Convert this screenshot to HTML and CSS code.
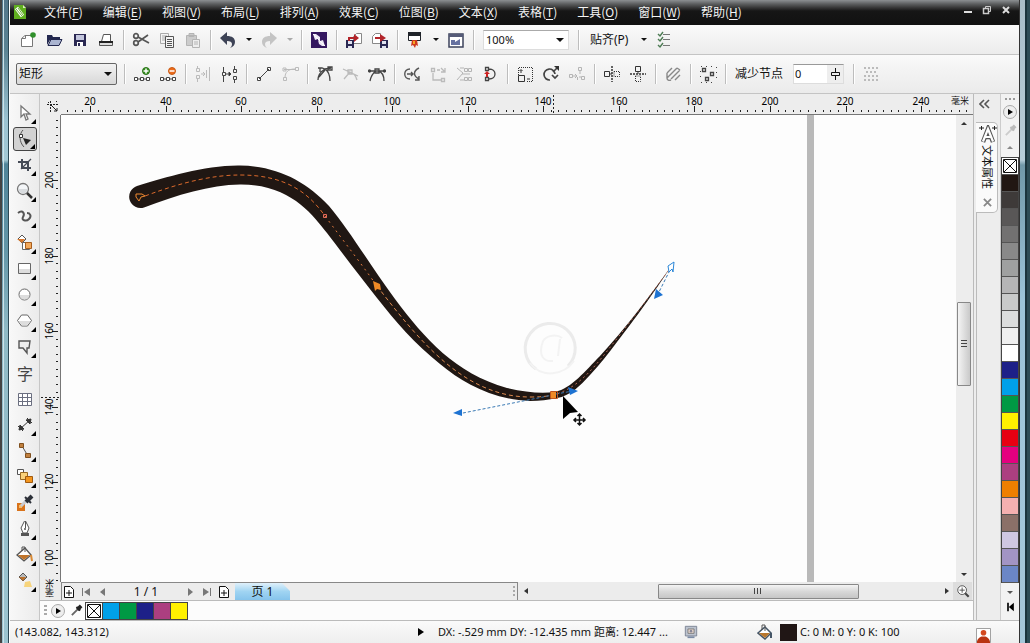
FILE: index.html
```html
<!DOCTYPE html>
<html lang="zh-CN">
<head>
<meta charset="utf-8">
<title>CorelDRAW</title>
<link rel="stylesheet" href="styles.css">
</head>
<body>
<div class="frame frame-left"></div>
<div class="app">
  <header class="menubar">
    <svg class="logo" viewBox="0 0 12 16"><path fill="#5fae1f" d="M0 1h9l3 3v11H0z"/><path fill="#d9f0b8" d="M9 1v3h3z"/><path stroke="#fff" stroke-width="4" d="M2.500 4l6 8"/><path stroke="#6fae3a" d="M2 5l6 7M4 4l5 7"/></svg>
    <nav class="menus">
      <button>文件(<u>F</u>)</button><button>编辑(<u>E</u>)</button><button>视图(<u>V</u>)</button><button>布局(<u>L</u>)</button><button>排列(<u>A</u>)</button><button>效果(<u>C</u>)</button><button>位图(<u>B</u>)</button><button>文本(<u>X</u>)</button><button>表格(<u>T</u>)</button><button>工具(<u>O</u>)</button><button>窗口(<u>W</u>)</button><button>帮助(<u>H</u>)</button>
    </nav>
    <div class="winbtns">
      <button aria-label="最小化"><svg viewBox="0 0 10 10"><path stroke="#ddd" stroke-width="2" d="M1 7h8"/></svg></button>
      <button aria-label="还原"><svg viewBox="0 0 10 10" fill="none" stroke="#ccc"><path d="M3.500 3V1.500h5v5H7"/><path stroke-width="1.500" d="M1.500 3.500h5v5h-5z"/></svg></button>
      <button aria-label="关闭"><svg viewBox="0 0 10 10"><path stroke="#ddd" stroke-width="2" d="M2 2l6 6M8 2l-6 6"/></svg></button>
    </div>
  </header>

  <div class="toolbar standard">
    <button class="ib" aria-label="新建"><svg viewBox="0 0 18 18"><path fill="#fff" stroke="#777" d="M2.500 7.500L6 4.500h7.500v11h-11z"/><path fill="none" stroke="#777" d="M3 7.500h3.500V5"/><circle cx="14" cy="4" r="2.800" fill="#2f8f2a"/></svg></button>
    <button class="ib" aria-label="打开"><svg viewBox="0 0 18 18"><path fill="#23284f" d="M2 14V4h5l1 2h7v3H5z"/><path fill="#aab4d0" stroke="#23284f" d="M3 14.500l3-6h11l-3 6z"/></svg></button>
    <button class="ib" aria-label="保存"><svg viewBox="0 0 18 18"><path fill="#2a2852" d="M3 3h12v12H3z"/><path fill="#c3c6dd" d="M5 4h8v5H5z"/><path fill="#fff" d="M6 11h6v4H6z"/><path fill="#2a2852" d="M7 12h2v3H7z"/></svg></button>
    <button class="ib" aria-label="打印"><svg viewBox="0 0 18 18"><path fill="#fff" stroke="#555" d="M6.500 3.500h7v7h-9z"/><path fill="#ddd" stroke="#555" d="M2.500 10.500h13v4h-13z"/><path stroke="#222" stroke-width="2" d="M2 11h14"/></svg></button>
    <i class="sep"></i>
    <button class="ib" aria-label="剪切"><svg viewBox="0 0 18 18" fill="none" stroke="#555" stroke-width="1.700"><circle cx="4" cy="5" r="2.300"/><circle cx="4" cy="12" r="2.300"/><path d="M6 6l11 6M6 11l10-7"/></svg></button>
    <button class="ib" aria-label="复制"><svg viewBox="0 0 18 18" fill="#f4f4f4"><path stroke="#aaa" d="M2.500 2.500h8v10h-8zM4 5h5M4 7h5M4 9h5"/><path stroke="#555" d="M7.500 5.500h8v11h-8zM9 8.500h5M9 10.500h5M9 12.500h5M9 14.500h5"/></svg></button>
    <button class="ib" aria-label="粘贴" disabled><svg viewBox="0 0 18 18" fill="#ccc" stroke="#b4b4b4"><path d="M2.500 4.500h10v10h-10zM5 2.500h5v3H5z"/><path fill="#eee" d="M8.500 8.500h7v8h-7zM10 11h4M10 13h4"/></svg></button>
    <i class="sep"></i>
    <button class="ib" aria-label="撤销"><svg viewBox="0 0 18 18"><path fill="#3d4356" d="M1 7l7-6v4c5 0 8 2 8 6 0 3-2 5-5 6 1-1 2-2 2-4s-2-3-5-3v4z"/></svg></button>
    <button class="drop" aria-label="撤销列表"></button>
    <button class="ib" aria-label="重做" disabled><svg viewBox="0 0 18 18"><path fill="#c4c4c4" d="M17 7l-7-6v4c-5 0-8 2-8 6 0 3 2 5 5 6-1-1-2-2-2-4s2-3 5-3v4z"/></svg></button>
    <button class="drop faint" aria-label="重做列表" disabled></button>
    <i class="sep"></i>
    <button class="ib" aria-label="搜索内容"><svg viewBox="0 0 18 18"><path fill="#34175f" d="M1 1h16v16H1z"/><path fill="#eee9f6" d="M3 3h3l4 3v4L8 8 5 9zM15 15h-3l-3-2-1-4 2 1 3-1z"/><path stroke="#fff" d="M3 3l12 12"/></svg></button>
    <i class="sep"></i>
    <button class="ib" aria-label="导入"><svg viewBox="0 0 18 18"><path fill="#fff" stroke="#888" d="M8.500 5.500l3-3h5v10h-8z"/><path fill="#2a2852" d="M1 9h8v8H1z"/><path fill="#dfe2ef" d="M3 10h4v3H3zM3 15h4v2H3z"/><path fill="#b3242a" d="M3 6h6V3l5 4-5 4V8H5v2H3z"/></svg></button>
    <button class="ib" aria-label="导出"><svg viewBox="0 0 18 18"><path fill="#fff" stroke="#888" d="M1.500 5.500l3-3h5v10h-8z"/><path fill="#2a2852" d="M9 9h8v8H9z"/><path fill="#dfe2ef" d="M11 10h4v3h-4zM11 15h4v2h-4z"/><path fill="#b3242a" d="M4 6h5V3l6 4-6 4V8H4z"/></svg></button>
    <i class="sep"></i>
    <button class="ib" aria-label="应用程序启动器"><svg viewBox="0 0 18 18"><path fill="#fff" stroke="#20242a" d="M2.500 1.500h12v8h-12z"/><path fill="#20242a" d="M2 1h13v4H2z"/><path fill="#cf3a1e" d="M6 9h5l1 6-2-1-1 3-2-3-2 1z"/><path fill="#f5a623" d="M7 10h2v3H7z"/></svg></button>
    <button class="drop" aria-label="启动器列表"></button>
    <button class="ib" aria-label="欢迎屏幕"><svg viewBox="0 0 18 18"><path fill="#fff" stroke="#3d435c" stroke-width="1.500" d="M2 3h14v13H2z"/><path fill="#555b78" d="M2 3h14v3H2z"/><path fill="#6671a0" d="M4 9h4v2l5-3v6H4z"/></svg></button>
    <i class="sep"></i>
    <label class="combo zoom"><select aria-label="缩放级别"><option>100%</option></select></label>
    <i class="sep"></i>
    <button class="snap">贴齐(P)</button><button class="drop" aria-label="贴齐选项"></button>
    <button class="ib" aria-label="选项"><svg viewBox="0 0 18 18" fill="none"><path stroke="#777" d="M8 3.500h7M8 8.500h7M8 14.500h7"/><path stroke="#4c7b53" stroke-width="1.400" d="M3 3l2 2 3-4M3 8l2 2 3-4M3 14l2 2 3-4"/></svg></button>
  </div>

  <div class="toolbar property">
    <label class="combo shape"><select aria-label="选取模式"><option>矩形</option></select></label>
    <i class="sep"></i>
    <button class="ib" aria-label="添加节点"><svg viewBox="0 0 18 18" fill="#fff" stroke="#444"><path d="M1.500 12.500h3v3h-3zM7.500 12.500h3v3h-3zM13.500 12.500h3v3h-3zM5 14h2M11 14h2"/><circle cx="13" cy="6" r="3.500" fill="#388e22" stroke="#2c761a"/><path stroke="#fff" stroke-width="1.500" d="M10.500 6h5M13 3.500v5"/></svg></button>
    <button class="ib" aria-label="删除节点"><svg viewBox="0 0 18 18" fill="#fff" stroke="#444"><path d="M1.500 12.500h3v3h-3zM7.500 12.500h3v3h-3zM13.500 12.500h3v3h-3zM5 14h2M11 14h2"/><circle cx="13" cy="6" r="3.500" fill="#ed6c1c" stroke="#c85a14"/><path stroke="#fff" stroke-width="1.500" d="M10.500 6h5"/></svg></button>
    <i class="sep"></i>
    <button class="ib" aria-label="连接两个节点" disabled><svg viewBox="0 0 18 18" fill="none" stroke="#bbb"><path d="M3.500 1v2M2.500 3.500h3v3h-3zM2.500 10.500h3v3h-3zM3.500 14v3M15.500 2v14M12.500 5v8M7 9h4M9 7l2 2-2 2"/></svg></button>
    <button class="ib" aria-label="断开曲线"><svg viewBox="0 0 18 18" fill="none" stroke="#444"><path d="M3.500 2v5M2.500 7.500h3v3h-3zM3.500 11v6M14.500 1v3M13.500 4.500h3v3h-3zM13.500 11.500h3v3h-3zM14.500 15v3M6 9h5"/><path fill="#222" d="M9 7l2 2-2 2z"/></svg></button>
    <i class="sep"></i>
    <button class="ib" aria-label="转换为线条"><svg viewBox="0 0 18 18" fill="#fff" stroke="#444"><path d="M4 14L14 4M2.500 12.500h3v3h-3zM12.500 2.500h3v3h-3z"/></svg></button>
    <button class="ib" aria-label="转换为曲线" disabled><svg viewBox="0 0 18 18" fill="none" stroke="#bbb"><path d="M4 13c0-6 3-9 10-9M2.500 12.500h3v3h-3zM14.500 2.500h3v3h-3zM3 4.500h12M2 3h3v3H2z"/></svg></button>
    <i class="sep"></i>
    <button class="ib" aria-label="尖突节点"><svg viewBox="0 0 18 18" fill="none" stroke="#444" stroke-width="1.300"><path d="M2 15c0-5 2-8 7-11M9 4c3 2 5 6 5 12M2 3h4l3 1 6-1M9 5l-6 7M12 2h4v3h-4zM4 3v4"/></svg></button>
    <button class="ib" aria-label="平滑节点" disabled><svg viewBox="0 0 18 18" fill="none" stroke="#bbb" stroke-width="1.300"><path d="M1 4l15 7M2 14l6-7c3 1 6 4 7 8M6 5h4v4H6z"/></svg></button>
    <button class="ib" aria-label="对称节点"><svg viewBox="0 0 18 18" fill="none" stroke="#444" stroke-width="1.300"><path d="M1 6h16M2 16c1-5 3-8 6-10M10 6c4 1 6 5 6 10M7 4h4v4H7z"/><circle cx="1.500" cy="6" r="1" fill="#222"/><circle cx="16.500" cy="6" r="1" fill="#222"/></svg></button>
    <i class="sep"></i>
    <button class="ib" aria-label="反转方向"><svg viewBox="0 0 18 18" fill="none" stroke="#555" stroke-width="1.400"><path d="M7 4C0 4 0 14 7 14M4 9h6M8 7l2 2-2 2M16 3c-6 3-6 8 0 11M16 11v4h-4"/></svg></button>
    <button class="ib" aria-label="延长曲线" disabled><svg viewBox="0 0 18 18" fill="none" stroke="#bbb" stroke-width="1.300"><path d="M2.500 3.500h3v3h-3zM4 8v7h8M12.500 13.500h3v3h-3zM8 5h3M12 3l4 4M16 3v4h-4"/></svg></button>
    <button class="ib" aria-label="提取子路径" disabled><svg viewBox="0 0 18 18" fill="none" stroke="#b5b5b5"><path d="M2 3l6 5-6 7M5 3h4M5 15h4M9.500 3.500h3v3h-3zM13.500 3.500h3v3h-3zM9.500 12.500h3v3h-3zM13.500 12.500h3v3h-3zM7 9h8"/></svg></button>
    <button class="ib" aria-label="闭合曲线"><svg viewBox="0 0 18 18" fill="none" stroke="#444" stroke-width="1.300"><path d="M8 4c8 0 8 10 0 10M4.500 2.500h3v3h-3zM4.500 12.500h3v3h-3z"/><path fill="#cc2222" stroke="none" d="M6 6l3 3H7v3H5V9H3z"/></svg></button>
    <i class="sep"></i>
    <button class="ib" aria-label="延展与缩放"><svg viewBox="0 0 18 18" fill="none" stroke="#333"><path stroke-dasharray="1 1" d="M2.500 10V2.500h14v14H10"/><path d="M2.500 10.500h6v6h-6zM5 5v3M3.500 6L5 4.500 6.500 6M11 14h3"/></svg></button>
    <button class="ib" aria-label="旋转与倾斜"><svg viewBox="0 0 18 18" fill="none" stroke="#444" stroke-width="1.700"><path d="M13 9a5.500 5.500 0 1 0-5 6M10 10l3 3 3-3M11 7l5-5"/><path fill="#333" stroke="none" d="M12 1h5v5z"/></svg></button>
    <button class="ib" aria-label="对齐节点" disabled><svg viewBox="0 0 18 18" fill="none" stroke="#b5b5b5"><path d="M1.500 9.500h3v3h-3zM10.500 2.500h3v3h-3zM13.500 11.500h3v3h-3zM5 11h4M7 9l2 2-2 2M12 6v3M11 12h2M9.500 12v3"/></svg></button>
    <i class="sep"></i>
    <button class="ib" aria-label="水平反射"><svg viewBox="0 0 18 18" fill="none" stroke="#333"><path d="M1.500 6.500h5v5h-5zM7 9h2"/><path stroke-width="1.500" stroke-dasharray="2 1" d="M9 1v16"/><path stroke-dasharray="1 1" d="M11 6.500h5.500v5H11z"/></svg></button>
    <button class="ib" aria-label="垂直反射"><svg viewBox="0 0 18 18" fill="none" stroke="#333"><path d="M6.500 1.500h5v5h-5zM9 7v2"/><path stroke-width="1.500" stroke-dasharray="2 1" d="M1 9h16"/><path stroke-dasharray="1 1" d="M6.500 11v5.500h5V11z"/></svg></button>
    <i class="sep"></i>
    <button class="ib" aria-label="弹性模式"><svg viewBox="0 0 18 18" fill="none" stroke="#888" stroke-width="1.400"><path d="M3 8l5-5M3 13L13 3M7 14l9-9M11 15l5-5M3 8v5M13 3l3 2M7 15c-2 1-4 0-4-2"/></svg></button>
    <i class="sep"></i>
    <button class="ib" aria-label="选择所有节点"><svg viewBox="0 0 18 18" fill="none" stroke="#444"><path stroke-width="1.300" d="M3.500 3.500h3v3h-3zM11.500 7.500h3v3h-3zM6.500 12.500h3v3h-3z"/><path stroke-dasharray="1 4" d="M2 1.500h15M2 17.500h15M1.500 6v8M17.500 2v15"/></svg></button>
    <i class="sep"></i>
    <label class="reduce" for="nodes">减少节点</label>
    <span class="spin"><input id="nodes" type="text" value="0"><button aria-label="调整数值"><svg viewBox="0 0 10 12" stroke="#111" fill="none"><path d="M5.500 0v4M1.500 4.500h8v3h-8zM5.500 7v5"/></svg></button></span>
    <i class="sep"></i>
    <button class="ib" aria-label="边框" disabled><svg viewBox="0 0 18 18" fill="none" stroke="#bbb" stroke-width="2"><path stroke-dasharray="2 2" d="M2 3h14M2 15h14M4 7h12M2 11h14"/></svg></button>
  </div>

  <div class="workspace">
    <aside class="toolbox">
      <button class="tool fly" aria-label="选择"><svg viewBox="0 0 18 18"><path fill="#fff" stroke="#777" stroke-width="1.300" d="M5 2v11l3-3 2 6 2-1-2-5h4z"/></svg></button>
      <button class="tool fly on" aria-label="形状"><svg viewBox="0 0 18 18"><path fill="none" stroke="#555" d="M7 0C3 4 3 12 8 17"/><path fill="#fff" stroke="#333" d="M3.500 4.500h3v3h-3z"/><path fill="#222" d="M7 8l8 2-5 5z"/></svg></button>
      <button class="tool fly" aria-label="裁剪"><svg viewBox="0 0 18 18" fill="none" stroke="#454b56" stroke-width="2"><path d="M6 3v9h9M2 6h10v9"/><path stroke-width="1.200" d="M5 13L15 3"/></svg></button>
      <button class="tool fly" aria-label="缩放"><svg viewBox="0 0 18 18"><circle cx="7" cy="7" r="5.500" fill="#f4f6f8" stroke="#777" stroke-width="1.300"/><path fill="#d9dcdf" d="M2.500 7h9c-1 6-8 6-9 0z"/><path stroke="#333" stroke-width="2.500" d="M11 11l5 5"/></svg></button>
      <button class="tool fly" aria-label="手绘"><svg viewBox="0 0 18 18" fill="none"><path stroke="#555" stroke-width="2" d="M2 5c5-4 7 1 5 4s3 5 6 2 1-6-2-6"/></svg></button>
      <button class="tool fly" aria-label="智能填充"><svg viewBox="0 0 18 18"><path fill="#fff" stroke="#555" d="M2 5l4-4 4 4-4 4z"/><path fill="#d8782d" d="M1 5h8L6 9z"/><path fill="#fff" stroke="#666" d="M6.500 8.500h7v7h-7z"/><path fill="#f3a85a" stroke="#a65d1d" d="M9.500 8.500h6v6h-6z"/></svg></button>
      <button class="tool fly" aria-label="矩形"><svg viewBox="0 0 18 18"><path fill="#fff" stroke="#666" d="M2.500 3.500h12v10h-12z"/><path fill="#ddd" d="M3 9h11v4H3z"/></svg></button>
      <button class="tool fly" aria-label="椭圆形"><svg viewBox="0 0 18 18"><circle cx="8.500" cy="8.500" r="5.500" fill="#fff" stroke="#666"/><path fill="#ddd" d="M3.500 9h10c-1 6-9 6-10 0z"/></svg></button>
      <button class="tool fly" aria-label="多边形"><svg viewBox="0 0 18 18"><path fill="#fff" stroke="#666" d="M1.500 8.500l4-5.500h6l4 5.500-4 5.500h-6z"/><path fill="#ddd" d="M2.500 9h12l-3.500 4.500H6z"/></svg></button>
      <button class="tool fly" aria-label="基本形状"><svg viewBox="0 0 18 18"><path fill="#eee" stroke="#555" stroke-width="1.400" d="M3 3h11l-1 7h-2v5l-4-5H3z"/></svg></button>
      <button class="tool glyph" aria-label="文本">字</button>
      <button class="tool" aria-label="表格"><svg viewBox="0 0 18 18" fill="#fff" stroke="#6b6f80"><path d="M2.500 3.500h13v12h-13zM2 7.500h14M2 11.500h14M6.500 3v13M11.500 3v13"/></svg></button>
      <button class="tool fly" aria-label="平行度量"><svg viewBox="0 0 18 18" stroke="#333" fill="#333"><path d="M4 13L14 4M2 10l5 5M11 2l5 5M3 14l1-5 4 4zM15 3l-5 1 4 4z"/></svg></button>
      <button class="tool fly" aria-label="直线连接器"><svg viewBox="0 0 18 18"><path stroke="#555" d="M6 4l6 10"/><path fill="#c0803f" stroke="#80501f" d="M3.500 1.500h4v4h-4zM9.500 11.500h5v4h-5z"/></svg></button>
      <button class="tool fly" aria-label="调和"><svg viewBox="0 0 18 18" stroke="#555"><path fill="#fff" d="M1.500 1.500h6v5h-6z"/><path fill="#fbd27a" stroke="#9a6a22" d="M4.500 4.500h7v7h-7z"/><path fill="#f3951d" stroke="#a05a10" d="M9.500 8.500h7v6h-7z"/></svg></button>
      <button class="tool fly" aria-label="颜色滴管"><svg viewBox="0 0 18 18"><path fill="#d9731b" d="M1 9h8v8H1z"/><path fill="#f6bd6a" d="M3 11h3v3H3z"/><path stroke="#c9ccd2" stroke-width="3" d="M5 12l6-6"/><path stroke="#2c3038" stroke-width="4" d="M10 8l6-6"/><path stroke="#2c3038" stroke-width="2" d="M9 3l6 6"/></svg></button>
      <button class="tool fly" aria-label="轮廓笔"><svg viewBox="0 0 18 18"><path fill="#fff" stroke="#555" d="M8.500 1L5 8l2 5h4l2-5-3.500-7v7"/><circle cx="9" cy="9" r="1" fill="#555"/><path fill="#555" d="M5 13h8v3H5z"/></svg></button>
      <button class="tool fly" aria-label="填充"><svg viewBox="0 0 18 18"><path fill="#fff" stroke="#555" stroke-width="1.300" d="M1 9l8-7 6 7-7 6z"/><path fill="#c0742a" d="M2 9h12l-6 5z"/><path stroke="#555" fill="none" d="M6 5V1h3v5"/><path stroke="#d98a35" stroke-width="2" d="M15 9l1 6"/></svg></button>
      <button class="tool fly" aria-label="交互式填充"><svg viewBox="0 0 18 18"><path fill="#bbb" stroke="#555" d="M3 5l4-4 4 4-4 4z"/><path fill="#b86f2b" d="M3 5h7L7 9z"/><path fill="#f7d47c" d="M9 10l5-1 2 6H8z"/></svg></button>
    </aside>

    <main class="document">
      <div class="view">
        <div class="corner"><svg viewBox="0 0 14 14" fill="none" stroke="#222"><path stroke-dasharray="2 1" d="M1 4.500h11M4.500 1v11"/><path d="M5 5l6 6M11 8v3H8M2 2l1 1M10 2l1-1"/></svg></div>
        <div class="hruler"><svg id="hr" class="ruler"></svg><span class="unit">毫米</span></div>
        <div class="vruler"><svg id="vr" class="ruler"></svg><span class="unit upright">毫米</span></div>
        <div class="canvas">
          <svg width="896" height="468" viewBox="61 115 896 468">
            <path fill="#b9b9b9" d="M807 100h7v1000h-7z"/>
            <g fill="none" stroke="#ebebeb" stroke-width="3"><path d="M536 369a25 25 0 1 1 32-3"/><path stroke="#f3f3f3" stroke-width="2" d="M530 363c12 16 34 12 44-2M543 341c4-6 14-7 19-3M543 341c-5 14 0 21 10 20M560 339l-2 17"/></g>
            <path fill="#201713" d="M137 186C167 177 205 165 240 165.500C277 166 306 181 329 206C350 231 370 265 395 299C425 339 455 373 507 388C525 392 540 394 555 392C572 388 585 371 600 356C625 329 650 296 672 265C651 297 637 316 617 342C608 354 600 364 590 375C580 386 570 396 557 398C548 400 540 401 530 401C490 399 462 382 440 364C415 344 395 321 377 298C358 274 340 250 327 233C312 214 290 184 240 184.500C210 185 177 195 144 207.500A11 11 0 1 1 137 186z"/>
            <g fill="none">
              <path stroke="#dc6a2c" stroke-dasharray="4 3" d="M145 196C185 181 215 175 240 175C285 175 308 192 325 216"/>
              <path stroke="#e07a40" stroke-dasharray="2 4" d="M325 216C345 243 360 262 377 286"/>
              <path stroke="#dc8a50" stroke-dasharray="4 3" d="M377 286C420 342 465 397 530 397Q545 397 553 395"/>
              <path stroke="#b96f5d" stroke-dasharray="2 3" d="M553 395C580 388 596 365 619 336S655 288 672 266"/>
              <path stroke="#3a7ab5" stroke-dasharray="3 2" d="M458 414L553 395M556 394L573 391M672 266L657 296"/>
              <path stroke="#f08a30" d="M136 194h6l3 2-4 1-2 4-3-4z"/>
              <path stroke="#e66a5b" d="M323.500 214.500h3v3h-3z"/>
              <path fill="#fff" stroke="#2b87d8" d="M674 262l-6 4 1 6 3-3 1 3z"/>
            </g>
            <path fill="#ef8a26" d="M373 281l7 3 1 6-4-1-2 2zM550 392h6v6h-6z"/>
            <path fill="none" stroke="#bf5420" d="M550.500 391.500h7v7h-7z"/>
            <path fill="#1e73d2" d="M453 413l9-4v7zM578 391l-10-4 2 8zM654 299l2-10 7 6z"/>
            <path fill="#000" d="M563 396v23l7-6 8-1z"/>
            <path fill="none" stroke="#111" stroke-width="1.500" d="M574 420h11M579.500 414v11M576 418l-2 2 2 2M583 418l2 2-2 2M577.500 416l2-2 2 2M577.500 423l2 2 2-2"/>
          </svg>
        </div>
        <div class="vscroll"><i class="tri up"></i><i class="thumb"></i><i class="tri down"></i></div>
      </div>
      <div class="pagebar">
        <div class="pager">
          <button aria-label="前面添加页"><svg viewBox="0 0 12 14" fill="#fff" stroke="#111"><path d="M1.500 1.500h6l3 3v8h-9zM6 5v6M3 8h6"/></svg></button>
          <button aria-label="首页"><svg viewBox="0 0 12 14"><path fill="#777" d="M2 3h1v8H2zM10 3v8L4 7z"/></svg></button>
          <button aria-label="上一页"><svg viewBox="0 0 12 14"><path fill="#777" d="M8 3v8L3 7z"/></svg></button>
          <span class="count">1 / 1</span>
          <button aria-label="下一页"><svg viewBox="0 0 12 14"><path fill="#777" d="M4 3v8l5-4z"/></svg></button>
          <button aria-label="末页"><svg viewBox="0 0 12 14"><path fill="#777" d="M9 3h1v8H9zM2 3v8l6-4z"/></svg></button>
          <button aria-label="后面添加页"><svg viewBox="0 0 12 14" fill="#fff" stroke="#111"><path d="M1.500 1.500h6l3 3v8h-9zM6 5v6M3 8h6"/></svg></button>
          <button class="tab">页 1</button>
          <i class="grip"></i>
        </div>
        <div class="hscroll"><i class="tri left"></i><i class="thumb"></i><i class="tri right"></i></div>
        <button class="nav" aria-label="导航器"><svg viewBox="0 0 16 16" fill="#fff" stroke="#444"><circle cx="7" cy="7" r="5"/><path d="M4 7h6M7 4v6"/><path stroke-width="2.500" d="M10.500 10.500l4 4"/></svg></button>
      </div>
      <div class="docpalette">
        <i class="grip"></i>
        <button class="round" aria-label="文档调色板"></button>
        <button class="pick" aria-label="滴管"><svg viewBox="0 0 14 14"><path stroke="#666" stroke-width="2" d="M2 12l7-7"/><path stroke="#222" stroke-width="4" d="M8 6l4-4"/><path stroke="#222" stroke-width="2" d="M7 3l4 4"/></svg></button>
        <div class="swatches" id="doc-colors"></div>
      </div>
    </main>

    <aside class="docker">
      <button class="collapse" aria-label="折叠"><svg viewBox="0 0 12 10" fill="none" stroke="#555" stroke-width="1.600"><path d="M5 1L1 5l4 4M10 1L6 5l4 4"/></svg></button>
      <div class="dtab">
        <svg class="aicon" viewBox="0 0 18 18"><path fill="none" stroke="#555" stroke-width="4.500" d="M4 17L9 4l5 13M6 12h6"/><path fill="none" stroke="#fff" stroke-width="2.200" d="M4 16.500L9 4l5 12.500M6 12h6"/><path stroke="#222" d="M0 3h5M2.500 1v4M13 3h5M15.500 1v4"/></svg>
        <span>文本属性</span>
        <button class="x" aria-label="关闭"><svg viewBox="0 0 10 10"><path stroke="#888" stroke-width="2" d="M1 1l8 8M9 1L1 9"/></svg></button>
      </div>
      <div class="dline"></div>
    </aside>

    <aside class="palette">
      <i class="dots"></i>
      <button class="round" aria-label="调色板菜单"></button>
      <button class="pick" aria-label="滴管"><svg viewBox="0 0 14 14"><path stroke="#ccc" stroke-width="2" d="M2 12l7-7"/><path stroke="#bbb" stroke-width="4" d="M8 6l4-4"/><path stroke="#bbb" stroke-width="2" d="M7 3l4 4"/></svg></button>
      <i class="tri up grey"></i>
      <div class="swatches column" id="main-colors"></div>
      <i class="tri down grey"></i>
      <button class="expand" aria-label="展开"><svg viewBox="0 0 10 12"><path d="M1 1h2v10H1zM9 1v10L3 6z"/></svg></button>
    </aside>
  </div>

  <footer class="status">
    <span class="coords">(143.082, 143.312)</span>
    <i class="play"></i>
    <span class="delta">DX: -.529 mm DY: -12.435 mm 距离: 12.447 ...</span>
    <svg class="proof" viewBox="0 0 16 16"><path fill="#bcc3cf" stroke="#777f90" d="M1.500 1.500h13v11h-13z"/><path fill="#ead9cf" stroke="#777" d="M4.500 4.500h7v5h-7z"/><circle cx="8" cy="7" r="1.500" fill="#889"/><path fill="#7b8ba5" d="M4 13h8v2H4z"/></svg>
    <svg class="bucket" viewBox="0 0 16 16"><path fill="#fff" stroke="#456" stroke-width="1.500" d="M1 9l7-6 6 6-6 6z"/><path fill="#b8762c" d="M2 9h11l-5 5z"/><path fill="none" stroke="#555" d="M5 6V1h3v6"/><path stroke="#456" stroke-width="2" d="M14 9v5"/></svg>
    <i class="fillcolor"></i>
    <span class="cmyk">C: 0 M: 0 Y: 0 K: 100</span>
    <svg class="user" viewBox="0 0 16 16"><path fill="#fff" stroke="#999" d="M.5.500h15v15H.5z"/><circle cx="8" cy="5" r="3" fill="#d4491f"/><path fill="#b93412" d="M1 16c0-5 3-6 5-7h4c2 1 5 2 5 7z"/></svg>
  </footer>
</div>
<div class="frame frame-right"></div>
<script src="app.js"></script>
</body>
</html>
```

FILE: styles.css
```css
* { box-sizing: border-box; }
body {
  margin: 0;
  height: 100vh;
  display: flex;
  overflow: hidden;
  font: 12px/16px "Noto Sans", "Noto Sans CJK SC", sans-serif;
  color: #111;
  background: #eee;
}
button {
  border: 0;
  padding: 0;
  margin: 0;
  background: none;
  color: inherit;
  font: inherit;
  display: flex;
  align-items: center;
  justify-content: center;
  flex: none;
}
svg { display: block; flex: none; }
i { display: block; flex: none; }

.frame { flex: none; }
.frame-left {
  width: 10px;
  background: linear-gradient(90deg, #444 0 2px, transparent 2px 3px, #cfe3ea 3px 4px, transparent 4px 8px, #2c4854 8px 9px, #fff 9px),
    linear-gradient(#52768a, #5b8494 50px, #9bc3d2 120px, #a3c8d4 160px, #4f8499 164px, #6396a8 250px, #8fbac6 330px, #9cc4d0);
}
.frame-right {
  width: 11px;
  background: linear-gradient(90deg, #333 0 1px, transparent 1px 6px, #1b343c 6px 8px, #2d4c55 8px),
    linear-gradient(#a9bec8, #b6cdd8 160px, #7198a8 165px, #9cc4d8 300px, #a5c7d9);
}
.app { flex: 1; min-width: 0; display: flex; flex-direction: column; }

/* menu */
.menubar {
  height: 25px;
  flex: none;
  display: flex;
  align-items: center;
  padding: 0 8px 2px 4px;
  background: linear-gradient(#8c9092, #5c5e5f 4px, #333 8px, #161616 11px, #111);
  color: #f4f4f4;
  font-family: "Noto Sans CJK SC", sans-serif;
}
.logo { width: 12px; height: 16px; margin-right: 18px; }
.menus { display: flex; flex: 1; gap: 20px; }
.menus u { text-underline-offset: 2px; }
.winbtns { display: flex; gap: 9px; margin-bottom: 4px; }
.winbtns svg { width: 10px; height: 10px; }

/* toolbars */
.toolbar {
  flex: none;
  display: flex;
  align-items: center;
  background: linear-gradient(#fafafa, #ececec);
  border-bottom: 1px solid #c4c4c4;
}
.standard { height: 30px; padding-left: 5px; }
.property { height: 39px; padding-left: 6px; background: linear-gradient(#fafafa, #f3f3f3 40%, #ebebeb); }
.ib { width: 26px; height: 24px; }
.ib svg { width: 18px; height: 18px; }
.sep { width: 9px; height: 20px; background: linear-gradient(90deg, transparent 4px, #bdbdbd 4px 5px, #fff 5px 6px, transparent 6px); }
.drop { width: 15px; height: 20px; }
.drop::before, .combo::after {
  content: "";
  border: 3px solid transparent;
  border-top-color: #111;
  border-bottom: 0;
}
.faint::before { border-top-color: #aaa; }
.combo { position: relative; display: block; flex: none; }
.combo::after { position: absolute; right: 5px; top: 50%; margin-top: -2px; border-width: 4px 4px 0; pointer-events: none; }
.combo select {
  appearance: none;
  width: 100%;
  height: 20px;
  display: block;
  border: 1px solid #ddd;
  border-top-color: #aaa;
  border-radius: 0;
  padding: 0 2px;
  margin: 0;
  background: #fff;
  color: #111;
  font: 12px/16px "Noto Sans", "Noto Sans CJK SC", sans-serif;
}
.zoom { width: 86px; margin: 0 5px; }
.zoom select { font-size: 11px; }
.shape { width: 101px; margin-right: 3px; }
.shape select {
  height: 22px;
  border: 1px solid #666;
  border-radius: 2px;
  background: linear-gradient(#f2f2f2, #d8d8d8);
}
.snap { margin: 0 8px 0 7px; }
.reduce { margin: 0 10px 0 5px; }
.spin { display: flex; width: 51px; height: 20px; background: #fff; border: 1px solid #ddd; border-top-color: #999; margin-right: 5px; }
.spin input { flex: 1; min-width: 0; border: 0; padding: 0 1px; background: none; font: 11px/16px "Noto Sans", sans-serif; color: #111; }
.spin button { width: 16px; background: #eee; }
.spin svg { width: 10px; height: 12px; }

/* workspace */
.workspace { flex: 1; min-height: 0; display: flex; }
.toolbox { width: 30px; flex: none; padding-top: 7px; background: linear-gradient(90deg, #f8f8f8, #ebebeb); border-right: 1px solid #c6c6c6; }
.tool { position: relative; width: 24px; height: 24px; margin: 0 0 2px 3px; }
.tool svg { width: 18px; height: 18px; }
.on { border: 1px solid #444; border-radius: 3px; background: #d2d2d2; }
.fly::after {
  content: "";
  position: absolute;
  right: 1px;
  bottom: 1px;
  border-left: 5px solid transparent;
  border-bottom: 5px solid #000;
}
.glyph { font: 16px/20px "Noto Sans CJK SC", sans-serif; color: #444; }

.document { flex: 1; min-width: 0; display: flex; flex-direction: column; border-right: 1px solid #bbb; }
.view { flex: 1; min-height: 0; display: grid; grid-template: 21px minmax(0, 1fr) / 21px minmax(0, 1fr) 17px; background: #ededed; }
.corner { padding: 6px 0 0 6px; }
.corner svg { width: 14px; height: 14px; }
.hruler, .vruler { position: relative; }
.hruler { grid-column: 2 / 4; border-bottom: 1px solid #777; }
.vruler { border-right: 1px solid #777; }
.ruler { width: 100%; height: 100%; font: 10px "Noto Sans", sans-serif; }
.unit { position: absolute; right: 4px; top: 1px; font: 9px/12px "Noto Sans CJK SC", sans-serif; }
.upright { right: auto; top: auto; left: 4px; bottom: -15px; writing-mode: vertical-rl; transform: rotate(180deg); }
.canvas { overflow: hidden; background: #fdfdfd; }
.vscroll { display: flex; flex-direction: column; align-items: center; padding: 7px 2px 6px 0; }
.vscroll .thumb { width: 14px; height: 84px; margin: 177px 0 auto; border: 1px solid #888; border-radius: 1px; background: linear-gradient(transparent 37px, #444 37px 38px, transparent 38px 40px, #444 40px 41px, transparent 41px 43px, #444 43px 44px, transparent 44px) center / 6px 100% no-repeat, linear-gradient(90deg, #f4f4f4, #c9c9c9); }
.tri { border: 3px solid transparent; }
.up { border-bottom-color: #333; border-top: 0; }
.down { border-top-color: #333; border-bottom: 0; }
.left { border-right: 4px solid #333; border-left: 0; }
.right { border-left: 4px solid #333; border-right: 0; }
.up.grey { border-bottom-color: #888; }
.down.grey { border-top-color: #555; }

.pagebar { height: 19px; flex: none; display: flex; border-bottom: 1px solid #bbb; background: #ececec; }
.pager { flex: none; width: 457px; height: 18px; display: flex; align-items: center; margin-left: 21px; border: solid #888; border-width: 1px 1px 0; }
.pager > button svg { width: 12px; height: 14px; }
.pager > button { width: 17px; padding-right: 3px; }
.count { flex: none; width: 70px; padding-right: 4px; text-align: center; }
.pager .tab { width: 55px; height: 17px; margin-left: 1px; padding: 0; background: linear-gradient(#e0f1fb, #a0d4f2 50%, #86c4ec); clip-path: polygon(0 0, 47px 0, 100% 8px, 100% 100%, 0 100%); }
.grip { width: 3px; height: 12px; background: repeating-linear-gradient(#aaa 0 2px, transparent 2px 4px); }
.pager .grip { margin-left: auto; margin-right: 2px; width: 2px; }
.hscroll { flex: 1; display: flex; align-items: center; padding: 0 4px 0 6px; }
.hscroll .thumb { width: 201px; height: 15px; margin: 0 auto 0 130px; border: 1px solid #888; border-radius: 1px; background: linear-gradient(90deg, transparent 95px, #444 95px 96px, transparent 96px 98px, #444 98px 99px, transparent 99px 101px, #444 101px 102px, transparent 102px) center / 100% 6px no-repeat, linear-gradient(#f4f4f4, #d8d8d8 50%, #c6c6c6); }
.nav { width: 19px; margin-right: 1px; background: #ddd; }
.nav svg { width: 14px; height: 14px; }

.docpalette { height: 19px; flex: none; display: flex; align-items: center; padding-left: 4px; background: #fcfcfc; }
.round { width: 14px; height: 14px; border: 1px solid #aaa; border-radius: 50%; background: #eee; }
.round::before { content: ""; border: 3px solid transparent; border-left: 5px solid #000; border-right: 0; }
.docpalette .round { margin: 0 4px; }
.pick { width: 14px; height: 14px; }
.pick svg { width: 13px; height: 13px; }
.docpalette .swatches { margin-left: 2px; }
.swatches { display: flex; height: 18px; border: solid #444; border-width: 1px 0 1px 1px; }
.swatches button { width: 17px; border-right: 1px solid #444; }
.swatches.column { flex-direction: column; width: 18px; height: auto; border-width: 1px 1px 0; }
.swatches.column button { width: 16px; height: 17px; border: 0; border-bottom: 1px solid #555; }
.swatches svg { width: 14px; height: 14px; }

.docker { width: 27px; flex: none; display: flex; flex-direction: column; background: #ededed; border-right: 1px solid #ccc; }
.collapse { height: 19px; width: 22px; }
.collapse svg { width: 12px; height: 10px; }
.dtab { width: 22px; margin: 9px 0 0 2px; height: 91px; padding: 2px 0 0 2px; display: flex; flex-direction: column; align-items: center; background: #fafafa; border: 1px solid #bbb; border-left: 0; border-radius: 0 5px 5px 0; }
.aicon { width: 18px; height: 18px; }
.dtab span { writing-mode: vertical-rl; font: 11px/14px "Noto Sans CJK SC", sans-serif; margin-top: 2px; height: 45px; text-orientation: sideways; white-space: nowrap; }
.x { margin-top: 8px; }
.x svg { width: 9px; height: 9px; }
.dline { flex: 1; margin-left: 2px; border-left: 1px solid #bbb; }

.palette { width: 18px; flex: none; display: flex; flex-direction: column; align-items: center; background: #f2f2f2; }
.dots { width: 11px; height: 2px; margin: 4px 0 5px; background: repeating-linear-gradient(90deg, #999 0 2px, transparent 2px 4px); }
.palette .pick { margin: 4px 0 9px; }
.palette .up { margin-bottom: 8px; }
.palette .down { margin: 8px 0; }
.expand svg { width: 9px; height: 10px; }

/* status */
.status {
  height: 23px;
  flex: none;
  display: flex;
  align-items: center;
  padding: 0 28px 0 5px;
  border-top: 1px solid #bbb;
  background: linear-gradient(#fafafa, #eee);
  font-size: 11px;
  white-space: nowrap;
}
.coords { width: 403px; }
.play { border: 4px solid transparent; border-left: 6px solid #000; border-right: 0; margin-right: 14px; }
.delta { width: 246px; }
.proof { width: 14px; height: 14px; }
.bucket { width: 16px; height: 16px; margin-left: 59px; }
.fillcolor { width: 17px; height: 17px; margin: 0 3px 0 7px; background: #201615; }
.cmyk { flex: 1; }
.user { width: 15px; height: 15px; margin-top: 7px; }
```

FILE: app.js
```js
const NS = "http://www.w3.org/2000/svg";
const STEP = 75.55;

function add(parent, name, attrs, text) {
  const el = document.createElementNS(NS, name);
  for (const key in attrs) el.setAttribute(key, attrs[key]);
  if (text !== undefined) el.textContent = text;
  parent.appendChild(el);
}

/* first: value and position of the first label; dir: change of value per step */
function ruler(svg, vertical, first, pos, dir, length, last) {
  let d = "";
  for (let i = -10; i < 200; i++) {
    const p = Math.round(pos + i * STEP / 10) + 0.5;
    if (p < 1 || p > length) continue;
    const size = i % 10 === 0 ? 6 : 2;
    d += vertical ? `M${18 - size} ${p}h${size}` : `M${p} ${18 - size}v${size}`;
  }
  add(svg, "path", { d, stroke: "#222" });
  for (let value = first, p = pos; dir > 0 ? value <= last : value >= last; value += 20 * dir, p += STEP) {
    const attrs = vertical
      ? { transform: `translate(13 ${Math.round(p)}) rotate(-90)`, "text-anchor": "middle" }
      : { x: Math.round(p), y: 11, "text-anchor": "middle" };
    add(svg, "text", attrs, value);
  }
}
ruler(document.getElementById("hr"), false, 20, 29, 1, 2000, 240);
ruler(document.getElementById("vr"), true, 200, 65, -1, 2000, 100);
add(document.getElementById("hr"), "path", { d: "M492.500 1v18", stroke: "#222", "stroke-dasharray": "2 2" });
add(document.getElementById("vr"), "path", { d: "M1 282.500h18", stroke: "#222", "stroke-dasharray": "2 2" });

function swatches(id, colors) {
  const box = document.getElementById(id);
  const none = document.createElement("button");
  none.style.background = "#fff";
  none.setAttribute("aria-label", "无");
  none.innerHTML = '<svg viewBox="0 0 14 14" fill="none" stroke="#111"><path d="M.5.5h13v13H.5zM1 1l12 12M13 1L1 13"/></svg>';
  box.appendChild(none);
  for (const color of colors) {
    const b = document.createElement("button");
    b.style.background = color;
    b.setAttribute("aria-label", color);
    box.appendChild(b);
  }
}
swatches("doc-colors", ["#00a0e9", "#009944", "#1d2088", "#ac3f80", "#fff100"]);
swatches("main-colors", ["#211713", "#3e3a39", "#595757", "#727171", "#898989", "#9fa0a0", "#b5b5b6", "#c9caca", "#dcdddd", "#efefef", "#ffffff",
  "#1d2088", "#00a0e9", "#009944", "#fff100", "#e60012", "#e4007f", "#ac3f80", "#ee7f00", "#f4b0b0", "#8b7068", "#cfc7e2", "#a294c4", "#6b86c6"]);
```
